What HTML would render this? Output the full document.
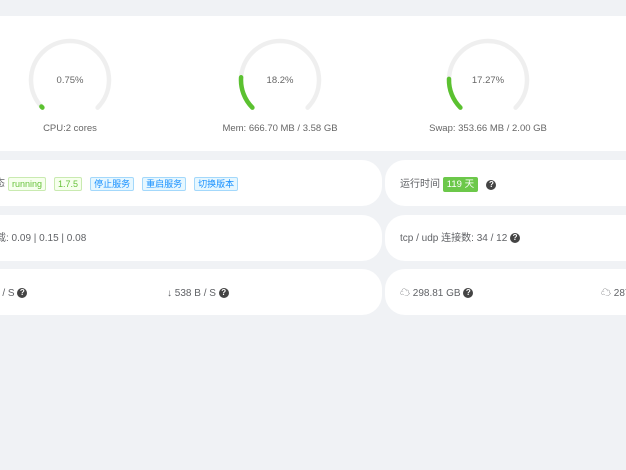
<!DOCTYPE html>
<html><head><meta charset="utf-8"><style>
*{margin:0;padding:0;box-sizing:border-box}
body{width:626px;height:470px;background:#f0f2f5;position:relative;overflow:hidden;font-family:"Liberation Sans","Noto Sans CJK SC",sans-serif;font-size:10px;color:#606266}
.card{position:absolute;background:#fff;border-radius:20px}
.t{position:absolute;white-space:nowrap;line-height:14px}
.tag{display:inline-block;height:14px;line-height:12px;padding:0 3px;border:1px solid;border-radius:2px;font-size:9px;margin-left:6px;vertical-align:middle}
.g{background:#f6ffed;border-color:#c9eab0;color:#67c23a}
.b{background:#e6f7ff;border-color:#a3d8fb;color:#1890ff}
.q{display:inline-block;width:10px;height:10px;border-radius:50%;background:#444;color:#fff;font-size:8px;line-height:10px;text-align:center;font-weight:bold;vertical-align:middle}
.lbl{position:absolute;width:160px;text-align:center;font-size:9.5px;color:#666}
</style></head><body>
<div style="position:absolute;left:0;top:16px;width:626px;height:135px;background:#fff"></div>
<svg style="position:absolute;left:0;top:0" width="626" height="160">
<g fill="none" stroke-width="4.5" stroke-linecap="round">
<path d="M42.4 107.6 A39 39 0 1 1 97.6 107.6" stroke="#efefef"/>
<path d="M42.4 107.6 A39 39 0 0 1 41.4 106.5" stroke="#5bc130"/>
<path d="M252.4 107.6 A39 39 0 1 1 307.6 107.6" stroke="#efefef"/>
<path d="M252.4 107.6 A39 39 0 0 1 241.1 77.3" stroke="#5bc130"/>
<path d="M460.4 107.6 A39 39 0 1 1 515.6 107.6" stroke="#efefef"/>
<path d="M460.4 107.6 A39 39 0 0 1 449 78.9" stroke="#5bc130"/>
</g></svg>
<div class="lbl" style="left:-10px;top:75px">0.75%</div>
<div class="lbl" style="left:200px;top:75px">18.2%</div>
<div class="lbl" style="left:408px;top:75px">17.27%</div>
<div class="lbl" style="left:-10px;top:123px">CPU:2 cores</div>
<div class="lbl" style="left:200px;top:123px">Mem: 666.70 MB / 3.58 GB</div>
<div class="lbl" style="left:408px;top:123px">Swap: 353.66 MB / 2.00 GB</div>

<div class="card" style="left:-30px;top:160px;width:412px;height:46px"></div>
<div class="card" style="left:-30px;top:215px;width:412px;height:46px"></div>
<div class="card" style="left:-30px;top:269px;width:412px;height:46px"></div>
<div class="card" style="left:385px;top:160px;width:270px;height:46px"></div>
<div class="card" style="left:385px;top:215px;width:270px;height:46px"></div>
<div class="card" style="left:385px;top:269px;width:270px;height:46px"></div>

<div class="t" style="left:-5px;top:177px">态<span class="tag g" style="margin-left:3px">running</span><span class="tag g" style="margin-left:8px">1.7.5</span><span class="tag b" style="margin-left:8px">停止服务</span><span class="tag b" style="margin-left:8px">重启服务</span><span class="tag b" style="margin-left:8px">切换版本</span></div>
<div class="t" style="left:-4px;top:232px">载: 0.09 | 0.15 | 0.08</div>
<div class="t" style="left:-6px;top:287px">4 / S <span class="q">?</span></div>
<div class="t" style="left:167px;top:287px">↓ 538 B / S <span class="q">?</span></div>
<div class="t" style="left:400px;top:177px">运行时间 <span class="tag" style="background:#6cc84a;border-color:#6cc84a;color:#fff;margin-left:0;height:15px;line-height:13px;font-size:9.5px">119 天</span>&nbsp;&nbsp;&nbsp;<span class="q">?</span></div>
<div class="t" style="left:400px;top:232px">tcp / udp 连接数: 34 / 12 <span class="q">?</span></div>
<div class="t" style="left:400px;top:287px">☁ 298.81 GB <span class="q">?</span></div>
<div class="t" style="left:601px;top:287px">☁ 287</div>
</body></html>
